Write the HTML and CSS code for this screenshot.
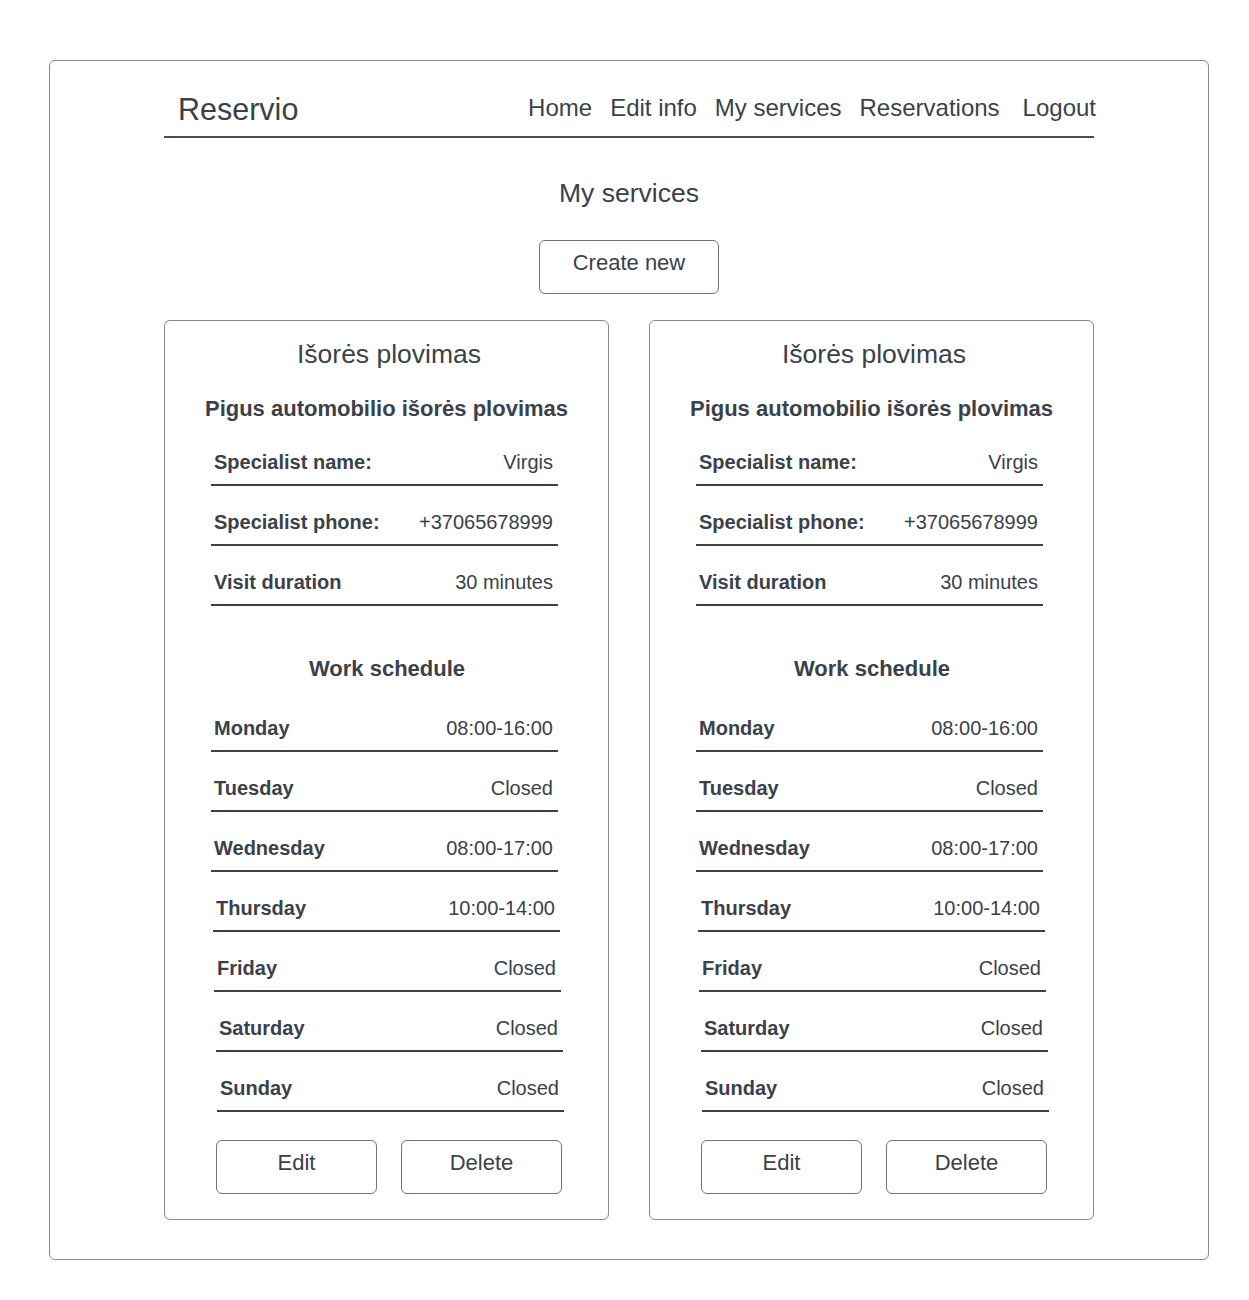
FILE: index.html
```html
<!DOCTYPE html>
<html lang="lt">
<head>
  <meta charset="UTF-8">
  <meta name="viewport" content="width=device-width, initial-scale=1.0">
  <title>Reservio - My services</title>
  <link rel="stylesheet" href="styles.css">
</head>
<body>
  <div class="frame">
    <!-- Top bar -->
    <header class="topbar">
      <div class="logo">Reservio</div>
      <nav class="nav">
        <a href="#">Home</a>
        <a href="#">Edit info</a>
        <a href="#">My services</a>
        <a href="#">Reservations</a>
        <a href="#" class="logout">Logout</a>
      </nav>
    </header>

    <h1 class="page-title">My services</h1>
    <div class="create-wrap">
      <button class="btn btn-create">Create new</button>
    </div>

    <div class="cards">
      <!-- Service card -->
      <div class="card">
        <h2 class="card-title">Išorės plovimas</h2>
        <h3 class="card-sub">Pigus automobilio išorės plovimas</h3>
        <div class="row"><span class="label">Specialist name:</span><span class="value">Virgis</span></div>
        <div class="row"><span class="label">Specialist phone:</span><span class="value">+37065678999</span></div>
        <div class="row"><span class="label">Visit duration</span><span class="value">30 minutes</span></div>

        <h3 class="schedule-title">Work schedule</h3>
        <div class="row"><span class="label">Monday</span><span class="value">08:00-16:00</span></div>
        <div class="row"><span class="label">Tuesday</span><span class="value">Closed</span></div>
        <div class="row"><span class="label">Wednesday</span><span class="value">08:00-17:00</span></div>
        <div class="row shift-2"><span class="label">Thursday</span><span class="value">10:00-14:00</span></div>
        <div class="row shift-3"><span class="label">Friday</span><span class="value">Closed</span></div>
        <div class="row shift-5"><span class="label">Saturday</span><span class="value">Closed</span></div>
        <div class="row shift-6"><span class="label">Sunday</span><span class="value">Closed</span></div>

        <div class="card-actions">
          <button class="btn">Edit</button>
          <button class="btn">Delete</button>
        </div>
      </div>

      <div class="card">
        <h2 class="card-title">Išorės plovimas</h2>
        <h3 class="card-sub">Pigus automobilio išorės plovimas</h3>
        <div class="row"><span class="label">Specialist name:</span><span class="value">Virgis</span></div>
        <div class="row"><span class="label">Specialist phone:</span><span class="value">+37065678999</span></div>
        <div class="row"><span class="label">Visit duration</span><span class="value">30 minutes</span></div>

        <h3 class="schedule-title">Work schedule</h3>
        <div class="row"><span class="label">Monday</span><span class="value">08:00-16:00</span></div>
        <div class="row"><span class="label">Tuesday</span><span class="value">Closed</span></div>
        <div class="row"><span class="label">Wednesday</span><span class="value">08:00-17:00</span></div>
        <div class="row shift-2"><span class="label">Thursday</span><span class="value">10:00-14:00</span></div>
        <div class="row shift-3"><span class="label">Friday</span><span class="value">Closed</span></div>
        <div class="row shift-5"><span class="label">Saturday</span><span class="value">Closed</span></div>
        <div class="row shift-6"><span class="label">Sunday</span><span class="value">Closed</span></div>

        <div class="card-actions">
          <button class="btn">Edit</button>
          <button class="btn">Delete</button>
        </div>
      </div>
    </div>
  </div>
</body>
</html>
```

FILE: styles.css
```css
* { margin: 0; padding: 0; box-sizing: border-box; font-family: 'Liberation Sans', Arial, sans-serif; }
body { background: #fff; color: #3b414a; }

.frame {
  width: 1160px;
  margin: 60px 0 0 49px;
  padding: 0 114px 39px;
  border: 1px solid #858a91;
  border-radius: 6px;
}

/* top bar */
.topbar {
  display: flex;
  align-items: flex-start;
  justify-content: space-between;
  padding: 31px 0 10px;
  border-bottom: 2px solid #474d56;
}
.logo {
  font-size: 30.5px;
  line-height: 34px;
  padding-left: 14px;
}
.nav {
  display: flex;
  gap: 18px;
  margin: 2px -2px 0 0;
}
.nav a {
  font-size: 24px;
  line-height: 28px;
  color: #3b414a;
  text-decoration: none;
}
.nav .logout { margin-left: 5px; }

.page-title {
  margin-top: 40px;
  text-align: center;
  font-size: 26.5px;
  line-height: 30px;
  font-weight: normal;
}
.create-wrap {
  display: flex;
  justify-content: center;
  margin-top: 32px;
}

.btn {
  flex: none;
  width: 161px;
  height: 54px;
  padding: 9px 0 17px;
  background: #fff;
  border: 1px solid #6f747c;
  border-radius: 6px;
  color: #3b414a;
  font-size: 22px;
  line-height: 26px;
  text-align: center;
  cursor: pointer;
}
.btn-create { width: 180px; }

/* service cards */
.cards {
  display: flex;
  gap: 40px;
  margin-top: 26px;
}
.card {
  width: 445px;
  padding: 18px 50px 25px 46px;
  border: 1px solid #858a91;
  border-radius: 6px;
}
.card-title {
  margin: 0 -50px 0 -41px;
  font-size: 26.5px;
  line-height: 30px;
  font-weight: normal;
  text-align: center;
}
.card-sub {
  margin: 27px -50px 4px -46px;
  font-size: 22px;
  line-height: 26px;
  text-align: center;
  white-space: nowrap;
}
.schedule-title {
  margin: 50px 0 10px 5px;
  font-size: 22px;
  line-height: 26px;
  text-align: center;
}

.row {
  display: flex;
  justify-content: space-between;
  padding: 24px 5px 10px 3px;
  border-bottom: 2px solid #3a414b;
  font-size: 20px;
  line-height: 24px;
}
.row .label { font-weight: bold; }
.row.shift-2 { margin: 0 -2px 0 2px; }
.row.shift-3 { margin: 0 -3px 0 3px; }
.row.shift-5 { margin: 0 -5px 0 5px; }
.row.shift-6 { margin: 0 -6px 0 6px; }

.card-actions {
  display: flex;
  gap: 24px;
  margin: 28px 0 0 5px;
}
```
